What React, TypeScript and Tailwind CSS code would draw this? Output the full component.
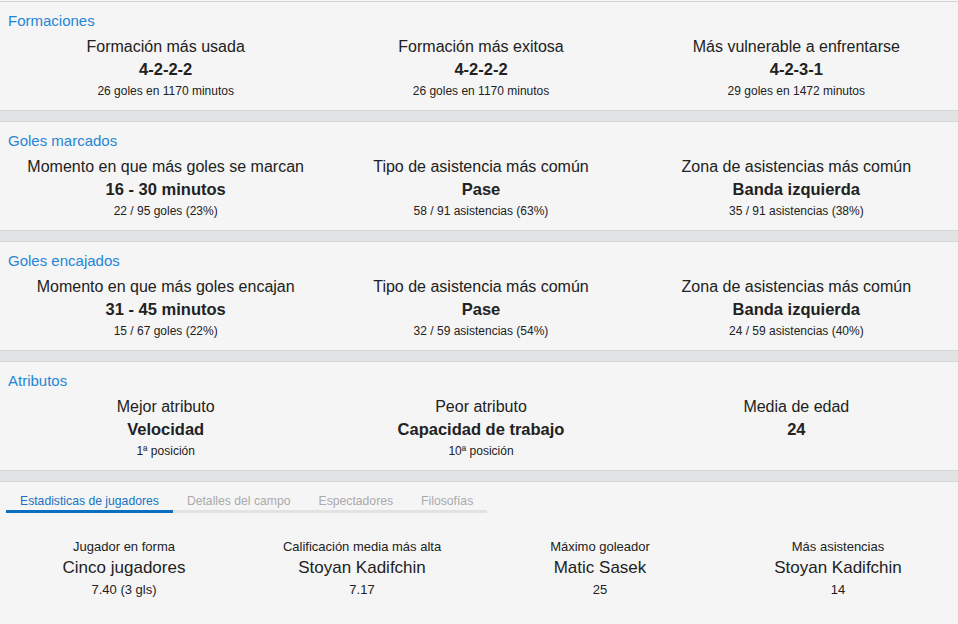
import React from "react";

type Stat = { label: string; value: string; sub: string };

const sections: { title: string; stats: Stat[] }[] = [
  {
    title: "Formaciones",
    stats: [
      { label: "Formación más usada", value: "4-2-2-2", sub: "26 goles en 1170 minutos" },
      { label: "Formación más exitosa", value: "4-2-2-2", sub: "26 goles en 1170 minutos" },
      { label: "Más vulnerable a enfrentarse", value: "4-2-3-1", sub: "29 goles en 1472 minutos" },
    ],
  },
  {
    title: "Goles marcados",
    stats: [
      { label: "Momento en que más goles se marcan", value: "16 - 30 minutos", sub: "22 / 95 goles (23%)" },
      { label: "Tipo de asistencia más común", value: "Pase", sub: "58 / 91 asistencias (63%)" },
      { label: "Zona de asistencias más común", value: "Banda izquierda", sub: "35 / 91 asistencias (38%)" },
    ],
  },
  {
    title: "Goles encajados",
    stats: [
      { label: "Momento en que más goles encajan", value: "31 - 45 minutos", sub: "15 / 67 goles (22%)" },
      { label: "Tipo de asistencia más común", value: "Pase", sub: "32 / 59 asistencias (54%)" },
      { label: "Zona de asistencias más común", value: "Banda izquierda", sub: "24 / 59 asistencias (40%)" },
    ],
  },
  {
    title: "Atributos",
    stats: [
      { label: "Mejor atributo", value: "Velocidad", sub: "1ª posición" },
      { label: "Peor atributo", value: "Capacidad de trabajo", sub: "10ª posición" },
      { label: "Media de edad", value: "24", sub: "" },
    ],
  },
];

const tabs = ["Estadisticas de jugadores", "Detalles del campo", "Espectadores", "Filosofías"];

const players: Stat[] = [
  { label: "Jugador en forma", value: "Cinco jugadores", sub: "7.40 (3 gls)" },
  { label: "Calificación media más alta", value: "Stoyan Kadifchin", sub: "7.17" },
  { label: "Máximo goleador", value: "Matic Sasek", sub: "25" },
  { label: "Más asistencias", value: "Stoyan Kadifchin", sub: "14" },
];

function Divider() {
  return <div className="h-[12px] bg-[#e2e3e5] border-y border-[#d3d4d6]" />;
}

function Section({ title, stats }: { title: string; stats: Stat[] }) {
  return (
    <div className="h-[108px] bg-[#f5f5f5] pt-[9px]">
      <div className="pl-[8px] text-[15px] leading-[20px] text-[#1f86d6]">{title}</div>
      <div className="grid grid-cols-3 pl-[8px] pr-[4px] mt-[6px]">
        {stats.map((s, i) => (
          <div key={i} className="flex flex-col items-center text-[#222]">
            <div className="text-[16px] leading-[20px] whitespace-nowrap">{s.label}</div>
            <div className="text-[16.5px] leading-[24px] font-bold whitespace-nowrap">{s.value}</div>
            <div className="text-[12px] leading-[20px] whitespace-nowrap">{s.sub}</div>
          </div>
        ))}
      </div>
    </div>
  );
}

export default function App() {
  return (
    <div
      className="w-[958px] h-[624px] overflow-hidden bg-[#f5f5f5]"
      style={{ fontFamily: '"Liberation Sans", Arial, sans-serif' }}
    >
      <div className="h-[1px] bg-[#f5f5f5]" />
      <div className="border-t border-[#d3d4d6]">
        {sections.map((s, i) => (
          <React.Fragment key={s.title}>
            {i > 0 && <Divider />}
            <Section title={s.title} stats={s.stats} />
          </React.Fragment>
        ))}
      </div>
      <Divider />
      <div className="bg-[#f5f5f5] pt-[12px]">
        <div className="flex ml-[6px] w-fit border-b-[3px] border-[#e2e2e2]">
          {tabs.map((t, i) => (
            <div
              key={t}
              className={
                i === 0
                  ? "px-[14px] text-[12.2px] leading-[14px] pb-[2px] -mb-[3px] border-b-[3px] border-[#0b6fc1] text-[#1673c4]"
                  : "px-[14px] text-[12.2px] leading-[14px] pb-[2px] text-[#aaaaaa]"
              }
            >
              {t}
            </div>
          ))}
        </div>
        <div className="grid grid-cols-4 ml-[5px] w-[952px] mt-[26px]">
          {players.map((p, i) => (
            <div key={i} className="flex flex-col items-center text-[#222]">
              <div className="text-[13px] leading-[16px] whitespace-nowrap">{p.label}</div>
              <div className="text-[17px] leading-[22px] mt-[2px] whitespace-nowrap">{p.value}</div>
              <div className="text-[13px] leading-[16px] mt-[3px] whitespace-nowrap">{p.sub}</div>
            </div>
          ))}
        </div>
      </div>
    </div>
  );
}
